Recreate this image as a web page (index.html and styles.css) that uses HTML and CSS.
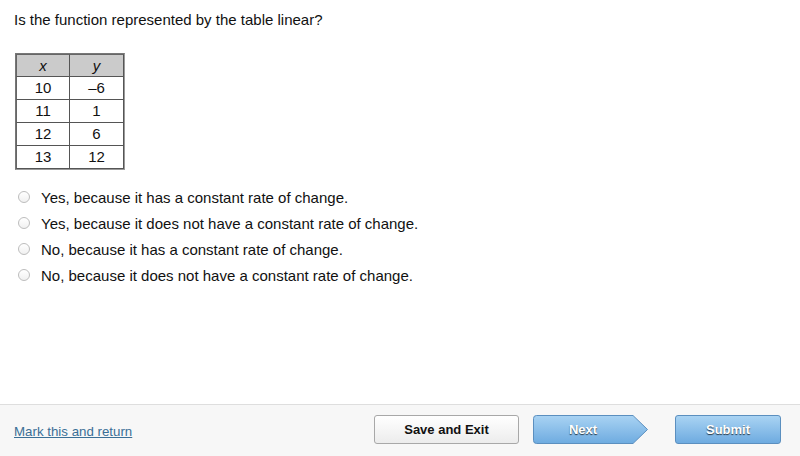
FILE: index.html
```html
<!DOCTYPE html>
<html>
<head>
<meta charset="utf-8">
<link rel="stylesheet" href="styles.css">
</head>
<body>
<div class="page">
  <main class="content">
    <p class="question">Is the function represented by the table linear?</p>
    <table class="data">
      <tr class="head"><th><i>x</i></th><th><i>y</i></th></tr>
      <tr><td>10</td><td>–6</td></tr>
      <tr><td>11</td><td>1</td></tr>
      <tr><td>12</td><td>6</td></tr>
      <tr><td>13</td><td>12</td></tr>
    </table>
    <ul class="options">
      <li><span class="radio"></span>Yes, because it has a constant rate of change.</li>
      <li><span class="radio"></span>Yes, because it does not have a constant rate of change.</li>
      <li><span class="radio"></span>No, because it has a constant rate of change.</li>
      <li><span class="radio"></span>No, because it does not have a constant rate of change.</li>
    </ul>
  </main>
  <footer class="footer">
    <a class="mark" href="#">Mark this and return</a>
    <button class="btn save">Save and Exit</button>
    <button class="next">
      <svg class="next-shape" width="116" height="29" viewBox="0 0 116 29">
        <defs>
          <linearGradient id="g" x1="0" y1="0" x2="0" y2="1">
            <stop offset="0" stop-color="#a9d3f3"/>
            <stop offset="1" stop-color="#6eabe0"/>
          </linearGradient>
        </defs>
        <path d="M3.5 0.5 H100 L114.5 14.5 L100 28.5 H3.5 Q0.5 28.5 0.5 25.5 V3.5 Q0.5 0.5 3.5 0.5 Z" fill="url(#g)" stroke="#5b8fbf" stroke-width="1"/>
      </svg>
      <span class="next-label">Next</span>
    </button>
    <button class="btn submit">Submit</button>
  </footer>
</div>
</body>
</html>
```

FILE: styles.css
```css
* { box-sizing: border-box; }
html, body { margin: 0; padding: 0; }
body {
  font-family: "Liberation Sans", Arial, Helvetica, sans-serif;
  color: #111;
  background: #fff;
  width: 800px;
  height: 456px;
  overflow: hidden;
}
.page {
  display: flex;
  flex-direction: column;
  height: 456px;
}
.content {
  height: 404px;
  padding: 11px 0 0 14px;
}
.question {
  margin: 0;
  font-size: 15px;
  line-height: 18px;
}
.data {
  margin: 24px 0 0 1px;
  border-collapse: separate;
  border-spacing: 0;
  border: 1px solid #9a9a9a;
  border-top-color: #777;
  border-left-color: #777;
  font-size: 15px;
}
.data th, .data td {
  width: 54px;
  height: 23px;
  padding: 0;
  text-align: center;
  font-weight: normal;
  border-right: 1px solid #555;
  border-bottom: 1px solid #555;
  line-height: 20px;
}
.data tr > :first-child { border-left: 1px solid #666; }
.data tr:first-child > * { border-top: 1px solid #666; }
.data th {
  background: #cbcbcb;
  height: 23px;
}
.options {
  list-style: none;
  margin: 14px 0 0 0;
  padding: 0;
}
.options li {
  display: flex;
  align-items: center;
  height: 26px;
  font-size: 15px;
}
.radio {
  width: 12px;
  height: 12px;
  border: 1px solid #bdbdbd;
  border-radius: 50%;
  margin: 0 11px 0 4px;
  background: linear-gradient(#fff, #f0f0f0);
}
.footer {
  flex: 1;
  display: flex;
  align-items: center;
  border-top: 1px solid #dedede;
  background: #f7f7f7;
  padding: 0 19px 2px 14px;
}
.mark {
  flex: 1;
  color: #3a6f96;
  font-size: 13.3px;
  text-decoration: underline;
  padding-top: 3px;
}
button {
  font-family: "Liberation Sans", Arial, Helvetica, sans-serif;
  font-weight: bold;
  font-size: 13px;
  cursor: pointer;
}
.btn {
  height: 29px;
  border-radius: 3px;
}
.save {
  width: 145px;
  border: 1px solid #a8a8a8;
  background: linear-gradient(#ffffff, #ececec);
  color: #111;
}
.next {
  margin-left: 14px;
  width: 116px;
  height: 29px;
  padding: 0;
  border: none;
  background: none;
  display: grid;
}
.next-shape, .next-label {
  grid-area: 1 / 1;
}
.next-label {
  width: 100px;
  align-self: center;
  justify-self: start;
  color: #fff;
  text-shadow: 0 1px 1px rgba(0, 0, 0, 0.7);
}
.submit {
  margin-left: 26px;
  width: 106px;
  border: 1px solid #5b8fbf;
  background: linear-gradient(#a9d3f3, #6eabe0);
  color: #fff;
  text-shadow: 0 1px 1px rgba(0, 0, 0, 0.7);
}
```
